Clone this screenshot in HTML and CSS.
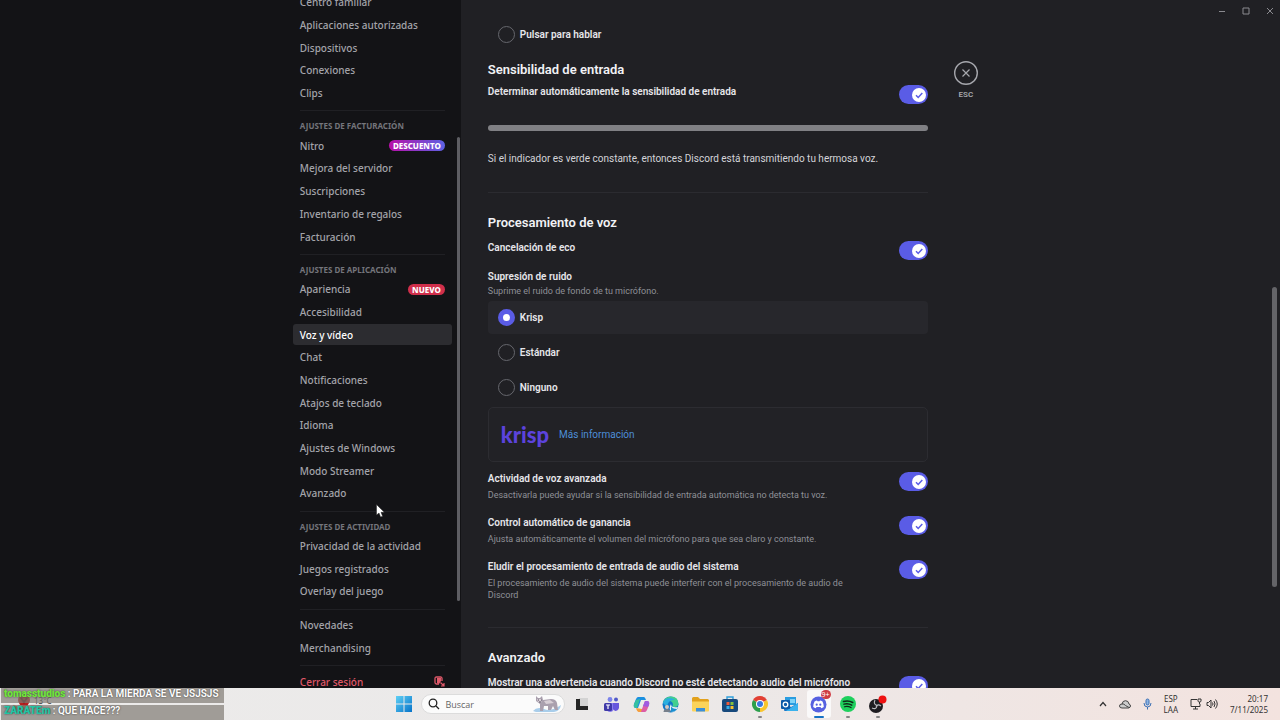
FILE: index.html
```
<!DOCTYPE html>
<html lang="es">
<head>
    <meta charset="UTF-8">
    <meta name="viewport" content="width=device-width, initial-scale=1.0">
    <title>Ajustes - Voz y vídeo</title>
    <link rel="stylesheet" href="styles.css">
</head>
<body>
    <div class="settings">
        <nav class="sidebar">
            <ul class="menu">
                <li><a href="#">Centro familiar</a></li>
                <li><a href="#">Aplicaciones autorizadas</a></li>
                <li><a href="#">Dispositivos</a></li>
                <li><a href="#">Conexiones</a></li>
                <li><a href="#">Clips</a></li>
                <li class="separator"></li>
                <li class="title">Ajustes de facturación</li>
                <li><a href="#">Nitro <span class="badge nitro">DESCUENTO</span></a></li>
                <li><a href="#">Mejora del servidor</a></li>
                <li><a href="#">Suscripciones</a></li>
                <li><a href="#">Inventario de regalos</a></li>
                <li><a href="#">Facturación</a></li>
                <li class="separator"></li>
                <li class="title">Ajustes de aplicación</li>
                <li><a href="#">Apariencia <span class="badge">NUEVO</span></a></li>
                <li><a href="#">Accesibilidad</a></li>
                <li><a href="#" class="active">Voz y vídeo</a></li>
                <li><a href="#">Chat</a></li>
                <li><a href="#">Notificaciones</a></li>
                <li><a href="#">Atajos de teclado</a></li>
                <li><a href="#">Idioma</a></li>
                <li><a href="#">Ajustes de Windows</a></li>
                <li><a href="#">Modo Streamer</a></li>
                <li><a href="#">Avanzado</a></li>
                <li class="separator"></li>
                <li class="title">Ajustes de actividad</li>
                <li><a href="#">Privacidad de la actividad</a></li>
                <li><a href="#">Juegos registrados</a></li>
                <li><a href="#">Overlay del juego</a></li>
                <li class="separator"></li>
                <li><a href="#">Novedades</a></li>
                <li><a href="#">Merchandising</a></li>
                <li class="separator"></li>
                <li><a href="#" class="logout">Cerrar sesión
                    <svg width="11" height="11" viewBox="0 0 11 11" fill="none" stroke="currentColor">
                        <path d="M8 5V2.500Q8 1 6.500 1H2.500Q1 1 1 2.500V6.500Q1 8 2.500 8H5" stroke-width="1.300"/>
                        <path d="M3 2h4v3L5 8 3 7z" fill="currentColor" stroke="none"/>
                        <path d="M6.500 6.500l3 3M10 7v3H7" stroke-width="1.200"/>
                    </svg></a></li>
            </ul>
            <div class="side-scroll"></div>
        </nav>

        <main class="content">
            <div class="column">
                <label class="option"><input type="radio" name="mode">Pulsar para hablar</label>

                <h2>Sensibilidad de entrada</h2>
                <div class="setting">
                    <label for="auto">Determinar automáticamente la sensibilidad de entrada</label>
                    <input type="checkbox" class="toggle" id="auto" checked>
                </div>
                <div class="meter"></div>
                <p class="note">Si el indicador es verde constante, entonces Discord está transmitiendo tu hermosa voz.</p>
                <hr>

                <h2>Procesamiento de voz</h2>
                <div class="setting">
                    <label for="echo">Cancelación de eco</label>
                    <input type="checkbox" class="toggle" id="echo" checked>
                </div>
                <fieldset class="noise">
                    <legend>Supresión de ruido</legend>
                    <p class="desc">Suprime el ruido de fondo de tu micrófono.</p>
                    <div class="options">
                        <label class="option selected"><input type="radio" name="noise" checked>Krisp</label>
                        <label class="option"><input type="radio" name="noise">Estándar</label>
                        <label class="option"><input type="radio" name="noise">Ninguno</label>
                    </div>
                </fieldset>
                <div class="card">
                    <span class="krisp">krisp</span>
                    <a href="#">Más información</a>
                </div>
                <div class="setting">
                    <div>
                        <label for="activity">Actividad de voz avanzada</label>
                        <p class="desc">Desactivarla puede ayudar si la sensibilidad de entrada automática no detecta tu voz.</p>
                    </div>
                    <input type="checkbox" class="toggle" id="activity" checked>
                </div>
                <div class="setting">
                    <div>
                        <label for="gain">Control automático de ganancia</label>
                        <p class="desc">Ajusta automáticamente el volumen del micrófono para que sea claro y constante.</p>
                    </div>
                    <input type="checkbox" class="toggle" id="gain" checked>
                </div>
                <div class="setting">
                    <div>
                        <label for="bypass">Eludir el procesamiento de entrada de audio del sistema</label>
                        <p class="desc">El procesamiento de audio del sistema puede interferir con el procesamiento de audio de Discord</p>
                    </div>
                    <input type="checkbox" class="toggle" id="bypass" checked>
                </div>
                <hr>

                <h2>Avanzado</h2>
                <div class="setting">
                    <label for="warn">Mostrar una advertencia cuando Discord no esté detectando audio del micrófono</label>
                    <input type="checkbox" class="toggle" id="warn" checked>
                </div>
            </div>

            <button class="close">
                <svg width="24" height="24" viewBox="0 0 24 24" fill="none" stroke="currentColor">
                    <circle cx="12" cy="12" r="11.300" stroke-width="1.400"/>
                    <path d="M8.500 8.500l7 7M15.500 8.500l-7 7" stroke-width="1.200"/>
                </svg>
                ESC
            </button>

            <div class="window-buttons">
                <button aria-label="Minimizar"><svg width="8" height="8" viewBox="0 0 8 8"><path d="M1 4.500h6"/></svg></button>
                <button aria-label="Maximizar"><svg width="8" height="8" viewBox="0 0 8 8"><path d="M1 1h6v6H1z"/></svg></button>
                <button aria-label="Cerrar"><svg width="8" height="8" viewBox="0 0 8 8"><path d="M1 1l6 6M7 1L1 7"/></svg></button>
            </div>
            <div class="main-scroll"></div>
        </main>
    </div>

    <footer class="taskbar">
        <div class="weather">
            <svg width="22" height="22" viewBox="0 0 22 22">
                <path d="M1 12l8 2 7-3-1 6-6 4-3-2z" fill="#c87a3c"/>
                <circle cx="12" cy="7" r="6" fill="#b81f1f"/>
                <path d="M9 5l3 4 3-4" fill="none" stroke="#4d0f0f" stroke-width="2"/>
            </svg>
            <span>13°C</span>
        </div>

        <div class="apps">
            <button class="app" aria-label="Inicio">
                <svg width="16" height="16" viewBox="0 0 16 16">
                    <defs><linearGradient id="win" x2="1" y2="1"><stop stop-color="#5fd0f5"/><stop offset="1" stop-color="#0673c9"/></linearGradient></defs>
                    <path d="M0 0h7.500v7.500H0zM8.500 0H16v7.500H8.500zM0 8.500h7.500V16H0zM8.500 8.500H16V16H8.500z" fill="url(#win)"/>
                </svg>
            </button>
            <div class="search">
                <svg width="12" height="12" viewBox="0 0 12 12" fill="none" stroke="#222" stroke-width="1.300"><circle cx="5" cy="5" r="3.800"/><path d="M8 8l3 3"/></svg>
                <input type="text" placeholder="Buscar" aria-label="Buscar">
                <svg width="30" height="18" viewBox="0 0 30 18">
                    <path d="M1 16Q5 11 12 14T29 10Q28 16 22 17H4z" fill="#a9cdea"/>
                    <path d="M4 1l2 2h2l2-2 1 4 8-1q5 0 6 4l1 7h-3l-2-4-2 4h-3v-4h-4l-1 5H8V9L4 6z" fill="#aaa0ae"/>
                    <path d="M5 4h5L9 8 6 7zM12 6l6-1 4 3-8 1z" fill="#d8cfd6"/>
                    <path d="M6 5h1M9 5h1M7 7h2" stroke="#554c60"/>
                </svg>
            </div>
            <div class="pinned">
                <button class="app" aria-label="Vista de tareas">
                    <svg width="14" height="14" viewBox="0 0 14 14"><path d="M4 1h9v9H4z" fill="#d3d3d3"/><path d="M1 2h4v7h8v4H1z" fill="#252525"/></svg>
                </button>
                <button class="app" aria-label="Teams">
                    <svg width="17" height="17" viewBox="0 0 17 17">
                        <circle cx="7" cy="3.500" r="2.400" fill="#7b83eb"/><circle cx="13" cy="3.500" r="2" fill="#5059c9"/>
                        <path d="M4 7h7v6q-1 3-4 3t-3-3z" fill="#8a7df0"/><path d="M10 7h6v5q-1 3-4 3l-2-2z" fill="#6757dd"/>
                        <rect x="1" y="7" width="8" height="8" rx="1.500" fill="#3f39a8"/><path d="M3 9h4M5 9v4" stroke="#fff" stroke-width="1.200"/>
                    </svg>
                </button>
                <button class="app" aria-label="Copilot">
                    <svg width="17" height="17" viewBox="0 0 17 17">
                        <path d="M5 1h6q1 0 2 3H8L5 12H3Q0 12 1 8l2-5q1-2 2-2z" fill="#1b8fe0"/>
                        <path d="M3 4l4-1-3 9H3Q0 12 1 8z" fill="#35c0a0"/>
                        <path d="M12 16H6q-1 0-2-3h5l3-8h2q3 0 2 4l-2 5q-1 2-2 2z" fill="#dd5ca5"/>
                        <path d="M12 5h2q3 0 2 4l-1 2-5-1z" fill="#a05ae0"/>
                        <path d="M3 12l6 1-1 3H6q-2 0-3-4z" fill="#f5a03c"/>
                    </svg>
                </button>
                <button class="app" aria-label="Edge">
                    <svg width="17" height="17" viewBox="0 0 17 17">
                        <circle cx="8.500" cy="8.500" r="8" fill="#1278c8"/>
                        <path d="M1 7Q2 1 9 .500q7 0 7.500 7-.500 4-5 3.500-2-1-.500-2 0-4-4-4-4 0-6 2z" fill="#42cf8f"/>
                        <path d="M1 7Q3 2 8 2q3 0 5 2-7-1-8 7z" fill="#2aaee0"/>
                        <path d="M9 8q0 4 7 3-2 5-6 5-4-3-1-8z" fill="#e9f2f5"/>
                        <path d="M9 10q1 3 6 3-2 3-6 3z" fill="#1b8fd0"/>
                        <circle cx="5" cy="11" r="2" fill="#d8c7bd"/><path d="M1.500 16q0-3 3.500-3t3.500 3z" fill="#777f8b"/>
                    </svg>
                </button>
                <button class="app" aria-label="Explorador">
                    <svg width="17" height="15" viewBox="0 0 17 15">
                        <path d="M0 1.500Q0 0 1.500 0H6l2 2h7.500Q17 2 17 3.500V13H0z" fill="#e2a11c"/>
                        <path d="M0 4.500h17v9q0 1-1 1H1q-1 0-1-1z" fill="#fbd35a"/><path d="M4 11h9v3.500H4z" fill="#3b8fd9"/>
                    </svg>
                </button>
                <button class="app" aria-label="Store">
                    <svg width="16" height="16" viewBox="0 0 16 16">
                        <path d="M5 4V1h6v3" fill="none" stroke="#2f9fdb" stroke-width="1.400"/>
                        <rect y="3" width="16" height="13" rx="2" fill="#17497c"/>
                        <path d="M4.500 6h3v3h-3z" fill="#ee5b3a"/><path d="M8.500 6h3v3h-3z" fill="#83c03c"/><path d="M4.500 10h3v3h-3z" fill="#35aee8"/><path d="M8.500 10h3v3h-3z" fill="#f7c02c"/>
                    </svg>
                </button>
                <button class="app running" aria-label="Chrome">
                    <svg width="16" height="16" viewBox="0 0 16 16">
                        <path d="M8 8L1.070 4A8 8 0 0 1 14.930 4z" fill="#e23f33"/><path d="M8 8l6.930-4A8 8 0 0 1 8 16z" fill="#f9c52c"/><path d="M8 8v8A8 8 0 0 1 1.070 4z" fill="#2c9f4b"/>
                        <circle cx="8" cy="8" r="4" fill="#fff"/><circle cx="8" cy="8" r="3" fill="#3b78e0"/>
                    </svg>
                </button>
                <button class="app" aria-label="Outlook">
                    <svg width="17" height="16" viewBox="0 0 17 16">
                        <path d="M4 1h11v8H4z" fill="#2a9de0"/><path d="M9 3h5v4H9z" fill="#7fd3f7"/>
                        <path d="M3 7l7 4 7-4v7q0 1-1 1H4q-1 0-1-1z" fill="#1b77c8"/><path d="M17 7v7q0 1-1 1H5z" fill="#39b2ed"/>
                        <rect y="4" width="9" height="9" rx="1" fill="#0c5aa8"/><circle cx="4.500" cy="8.500" r="2.300" fill="none" stroke="#fff" stroke-width="1.300"/>
                    </svg>
                </button>
                <button class="app current" aria-label="Discord">
                    <svg width="17" height="17" viewBox="0 0 17 17">
                        <circle cx="8.500" cy="8.500" r="8" fill="#5661e0"/>
                        <path d="M4.500 5.500q1.500-1 2.500-1l.500.800h2l.500-.800q1 0 2.500 1 1.500 3 1.300 5.500-1.300 1-2.600 1.200l-.700-1.200h-4l-.700 1.200Q4.500 12 3.200 11 3 8.500 4.500 5.500z" fill="#fff"/>
                        <circle cx="6.700" cy="8.700" r="1.100" fill="#5661e0"/><circle cx="10.300" cy="8.700" r="1.100" fill="#5661e0"/>
                    </svg>
                    <span class="count">9+</span>
                </button>
                <button class="app running" aria-label="Spotify">
                    <svg width="16" height="16" viewBox="0 0 16 16" fill="none" stroke="#0e2a17" stroke-linecap="round">
                        <circle cx="8" cy="8" r="8" fill="#1ed05d" stroke="none"/>
                        <path d="M3.500 5.500q5-1.500 9.200 1" stroke-width="1.600"/><path d="M4 8.200q4-1.200 7.800 1" stroke-width="1.400"/><path d="M4.500 10.800q3.300-1 6.500.800" stroke-width="1.200"/>
                    </svg>
                </button>
                <button class="app running" aria-label="OBS">
                    <svg width="19" height="19" viewBox="0 0 19 19">
                        <circle cx="8" cy="11" r="7" fill="#1d1c20"/>
                        <g fill="none" stroke="#b9b9bd" stroke-width="1.100"><path d="M7 5q-2 4 2 5.500M13 11q-3-2.500-5 .500M4 13q4 2 5-2"/></g>
                        <circle cx="14.500" cy="4.500" r="4" fill="#ee1212"/>
                    </svg>
                </button>
            </div>
        </div>

        <div class="tray">
            <svg width="8" height="6" viewBox="0 0 8 6" fill="none" stroke="#333" stroke-width="1.200"><path d="M1 5l3-3.500L7 5"/></svg>
            <svg width="12" height="9" viewBox="0 0 12 9" fill="#ccc" stroke="#444"><path d="M3 8q-2.500 0-2.500-2T3 4q.500-3.300 3.500-3.300T10 4q1.500.500 1.500 2T9.500 8z"/><path d="M3 4q2-.500 3.500 1.500L10 7.500" fill="none"/></svg>
            <svg width="9" height="12" viewBox="0 0 9 12" fill="none" stroke="#3a6fb5"><rect x="3" y="1" width="3" height="6" rx="1.500" fill="#8db4e2"/><path d="M1 5q0 4 3.500 4T8 5M4.500 9v2.500"/></svg>
            <div class="lang">ESP<br>LAA</div>
            <div class="status">
                <svg width="12" height="12" viewBox="0 0 12 12" fill="none" stroke="#333"><path d="M7 1.500H1v7h9V6M3 11h5M5.500 9v2M9.500 6V4M8 1v2q0 1 1.500 1T11 3V1z"/></svg>
                <svg width="12" height="12" viewBox="0 0 12 12" fill="none" stroke="#333"><path d="M1 4.500h1.500L5 2v8L2.500 7.500H1zM6.500 4.500q1 1.500 0 3M8 3q2 3 0 6M9.500 1.500q3.500 4.500 0 9"/></svg>
            </div>
            <time>20:17<br>7/11/2025</time>
        </div>

        <div class="chat">
            <p><b class="user-one">tomasstudios</b> : PARA LA MIERDA SE VE JSJSJS</p>
            <p><b class="user-two">ZARATEm</b> : QUE HACE???</p>
        </div>
    </footer>

    <svg class="cursor" width="9" height="14" viewBox="0 0 9 14"><path d="M.500.500v10.500l2.500-2 1.600 4 2-.800L5 8.300h3.300z" fill="#fff" stroke="#222" stroke-width=".500"/></svg>
</body>
</html>
```
FILE: styles.css
```
* {
    box-sizing: border-box;
}
body {
    margin: 0;
    height: 100vh;
    display: flex;
    flex-direction: column;
    overflow: hidden;
    font-family: Roboto, sans-serif;
    font-size: 10px;
    line-height: 16px;
    color: #e6e6ea;
    background: #202024;
}
button,
input {
    font-family: inherit;
    margin: 0;
}
button {
    border: 0;
    padding: 0;
    background: none;
}
svg {
    display: block;
    flex: none;
}
.settings {
    flex: 1;
    min-height: 0;
    display: grid;
    grid-template-columns: 36% 64%;
    grid-template-rows: 100%;
}

/* sidebar */
.sidebar {
    position: relative;
    display: flex;
    justify-content: flex-end;
    padding-right: 9px;
    font-family: "Noto Sans", sans-serif;
    background: #131316;
    overflow: hidden;
}
.menu {
    display: flex;
    flex-direction: column;
    width: 159px;
    margin: -9px 0 -5px;
    padding: 0;
    list-style: none;
}
.menu li {
    flex: 1 1 0;
    display: flex;
    align-items: center;
    min-height: 0;
}
.menu a {
    flex: 1;
    display: flex;
    align-items: center;
    justify-content: space-between;
    height: 21px;
    padding: 0 7px;
    border-radius: 3px;
    color: #a3a4aa;
    font-weight: 500;
    text-decoration: none;
}
.menu a.active {
    color: #fff;
    background: #2c2c30;
}
.menu a.logout {
    color: #e0596a;
}
.menu .separator {
    flex: none;
    height: 1px;
    margin: 6px 7px 4px;
    background: #202024;
}
.menu .title {
    flex: none;
    height: 19px;
    padding: 3px 7px 0;
    font-size: 8px;
    font-weight: 700;
    color: #74757b;
    text-transform: uppercase;
}
.badge {
    padding: 0 4px;
    border-radius: 6px;
    font-size: 8px;
    line-height: 11px;
    font-weight: 800;
    color: #fff;
    background: #d02f4b;
}
.badge.nitro {
    background: linear-gradient(90deg, #b80fa8, #5d62e4);
}
.side-scroll {
    position: absolute;
    top: 137px;
    bottom: 87px;
    right: 1px;
    width: 3px;
    border-radius: 2px;
    background: #5e5e63;
}

/* content */
.content {
    position: relative;
    display: flex;
    align-items: flex-start;
    padding: 18px 27px 0;
    overflow: hidden;
}
.column {
    flex: 0 1 440px;
}
h2 {
    margin: 10px 0 5px;
    font-size: 13px;
    line-height: 18px;
    font-weight: 600;
    color: #f2f2f5;
}
hr {
    height: 1px;
    margin: 25px 0 21px;
    border: 0;
    background: #2b2b30;
}
hr + h2 {
    margin: 0 0 8px;
}
.setting {
    display: flex;
    justify-content: space-between;
    gap: 32px;
    margin-bottom: 13px;
}
.setting label,
legend {
    display: block;
    font-weight: 600;
}
.toggle {
    flex: none;
    appearance: none;
    width: 29px;
    height: 19px;
    margin: 1px 0 -4px;
    border-radius: 10px;
    background: #5a5ce6 url("data:image/svg+xml,%3Csvg xmlns='http://www.w3.org/2000/svg' viewBox='0 0 14 14'%3E%3Ccircle cx='7' cy='7' r='7' fill='white'/%3E%3Cpath d='M4 7.300l2.200 2.200L10.300 5' fill='none' stroke='%235a5ce6' stroke-width='1.500'/%3E%3C/svg%3E") no-repeat right 2px center / 14px 14px;
}
.meter {
    height: 6px;
    margin: 25px 0 20px;
    border-radius: 3px;
    background: #808084;
}
.note {
    margin: 0;
    color: #d4d4d9;
}
.desc {
    margin: 2px 0 1px;
    font-size: 9px;
    line-height: 12px;
    color: #8f9097;
}
.noise {
    margin: 0;
    padding: 0;
    border: 0;
    min-width: 0;
}
.noise legend {
    padding: 0;
}
.noise .desc {
    margin: 0 0 4px;
}
.options {
    display: flex;
    flex-direction: column;
    gap: 2px;
}
.option {
    display: flex;
    align-items: center;
    gap: 5px;
    height: 33px;
    padding: 0 10px;
    border-radius: 4px;
    font-weight: 600;
}
.option.selected {
    background: #27272c;
}
.option input {
    appearance: none;
    width: 17px;
    height: 17px;
    border: 1px solid #66676d;
    border-radius: 50%;
}
.option input:checked {
    border: 5px solid #5a5ce6;
    background: #fff;
}
.card {
    display: flex;
    align-items: center;
    gap: 10px;
    height: 55px;
    margin: 3px 0 9px;
    padding: 0 12px;
    border: 1px solid #2c2c31;
    border-radius: 5px;
    background: #222226;
}
.card a {
    color: #4d8ed8;
    text-decoration: none;
}
.krisp {
    font-family: Lato, sans-serif;
    font-size: 22px;
    font-weight: 900;
    color: #5c43dc;
}
.close {
    display: flex;
    flex-direction: column;
    align-items: center;
    gap: 2px;
    margin: 43px 0 0 26px;
    font-size: 8px;
    line-height: 16px;
    font-weight: 600;
    color: #a6a7ad;
}
.window-buttons {
    position: absolute;
    top: 7px;
    right: 6px;
    display: flex;
    gap: 16px;
}
.window-buttons svg {
    fill: none;
    stroke: #8a8a8f;
}
.main-scroll {
    position: absolute;
    top: 287px;
    bottom: 101px;
    right: 3px;
    width: 5px;
    border-radius: 3px;
    background: #646468;
}

/* taskbar */
.taskbar {
    position: relative;
    flex: none;
    display: grid;
    grid-template-columns: 1fr 39% 1fr;
    align-items: center;
    height: 32px;
    font-family: "Noto Sans", sans-serif;
    color: #333;
    background: linear-gradient(90deg, #ecebea, #ebe9e9 50%, #f3e3df);
}
.weather {
    display: flex;
    padding-left: 12px;
    font-size: 8px;
}
.apps {
    display: flex;
    align-items: center;
    gap: 5px;
    padding-left: 2px;
}
.app {
    position: relative;
    display: flex;
    align-items: center;
    justify-content: center;
    width: 24px;
    height: 28px;
}
.search {
    display: flex;
    align-items: center;
    gap: 5px;
    width: 144px;
    height: 20px;
    padding: 0 2px 0 6px;
    border: 1px solid #dcdcdc;
    border-radius: 10px;
    background: #fbfbfb;
}
.search input {
    flex: 1;
    min-width: 0;
    padding: 0;
    border: 0;
    outline: 0;
    font-family: "Open Sans", sans-serif;
    font-size: 9px;
    background: none;
}
.search input::placeholder {
    color: #666;
}
.pinned {
    flex: 1;
    display: flex;
    justify-content: space-between;
}
.running::after,
.current::after {
    content: "";
    position: absolute;
    bottom: 0;
    width: 4px;
    height: 2px;
    border-radius: 1px;
    background: #858585;
}
.current {
    border-radius: 3px;
    background: #faf9f9;
}
.current::after {
    width: 10px;
    background: #1672c4;
}
.count {
    position: absolute;
    top: 0;
    right: 0;
    padding: 0 1px;
    border-radius: 5px;
    font-size: 7px;
    line-height: 9px;
    color: #fff;
    background: #cf3c45;
}
.tray {
    display: flex;
    align-items: center;
    justify-content: flex-end;
    gap: 12px;
    padding-right: 12px;
    font-size: 8px;
    line-height: 11px;
}
.lang {
    text-align: center;
}
.status {
    display: flex;
    gap: 4px;
}
.tray time {
    text-align: right;
}
.chat {
    position: absolute;
    top: 0;
    left: 1px;
    width: 223px;
    display: flex;
    flex-direction: column;
    gap: 2px;
    font-family: Roboto, sans-serif;
    font-size: 10px;
    line-height: 12px;
    font-weight: 600;
    color: #fff;
    text-shadow: 0 0 2px #333;
}
.chat p {
    margin: 0;
    padding: 0 3px 3px;
    background: rgba(128, 122, 116, 0.7);
}
.user-one {
    color: #6fe63a;
}
.user-two {
    color: #22c5a5;
}
.cursor {
    position: absolute;
    top: 504px;
    left: 376px;
}
```
